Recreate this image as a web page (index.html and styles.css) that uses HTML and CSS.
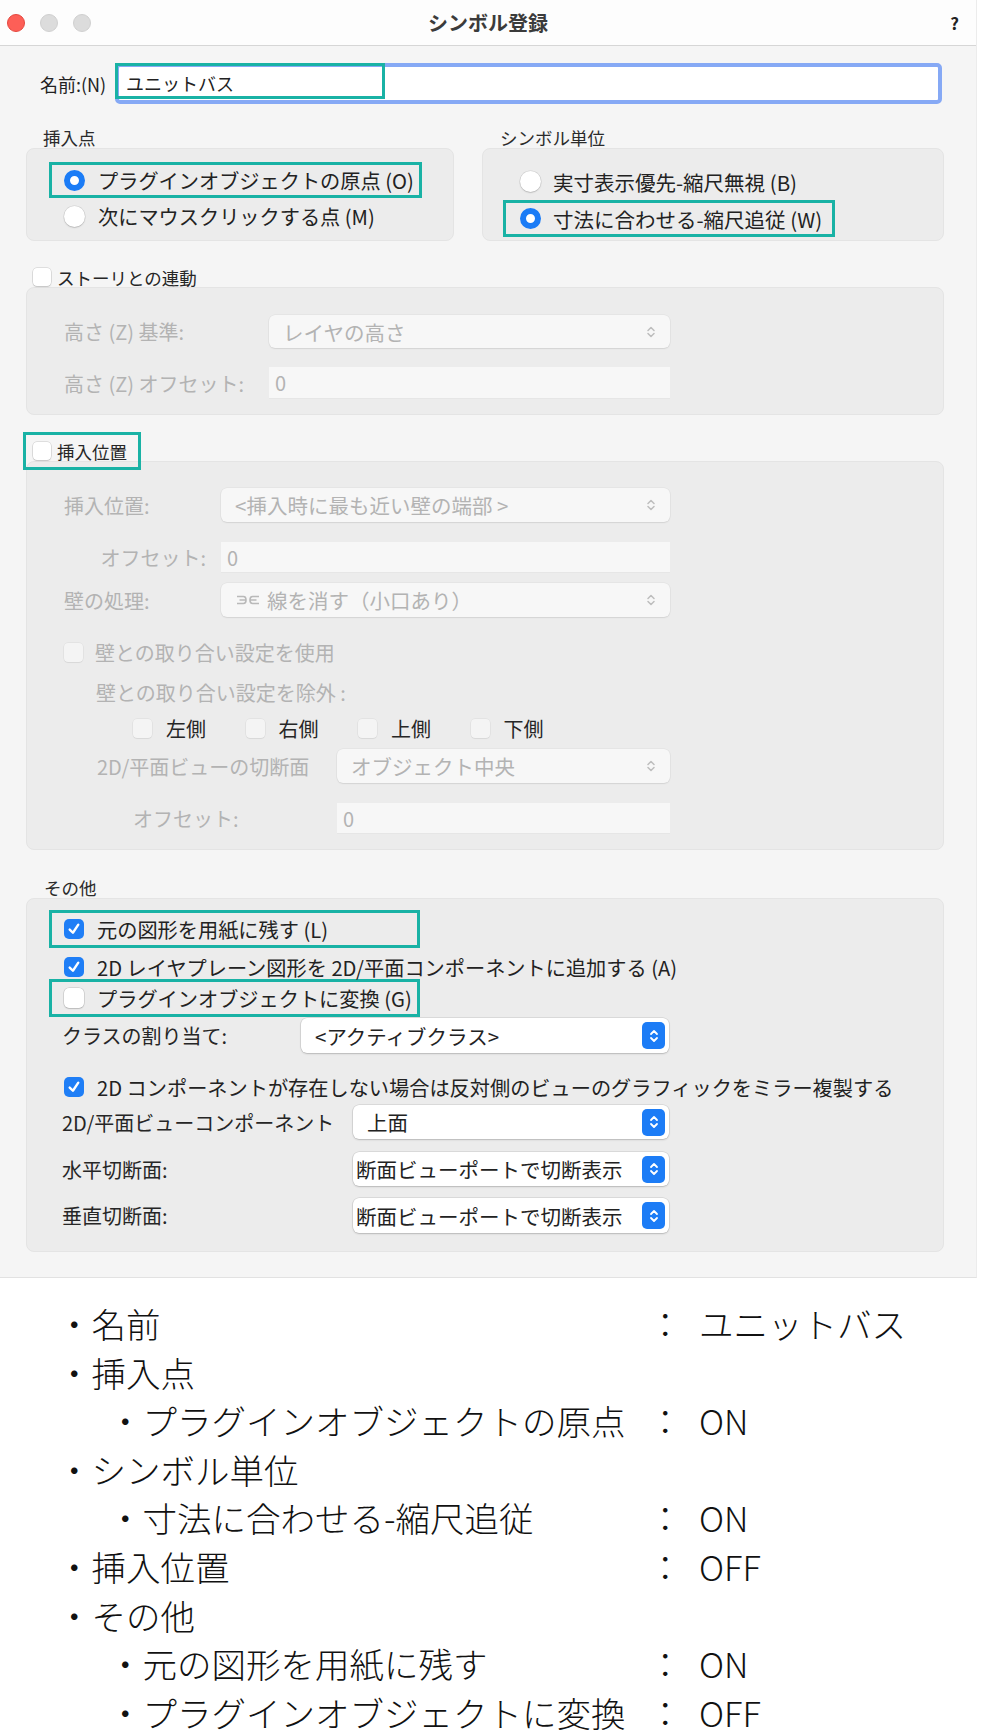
FILE: index.html
```html
<!DOCTYPE html>
<html lang="ja">
<head>
  <meta charset="UTF-8">
  <title>シンボル登録</title>
  <link rel="stylesheet" href="styles.css">
</head>
<body>
  <div class="dialog">
    <div class="titlebar">
      <div class="lights">
        <span class="light red"></span>
        <span class="light"></span>
        <span class="light"></span>
      </div>
      <div class="title">シンボル登録</div>
      <div class="help">?</div>
    </div>

    <div class="content">
      <div class="name-row">
        <span class="name-label">名前:(N)</span>
        <div class="name-field"><span class="name-mark"></span>ユニットバス</div>
      </div>

      <div class="cols">
        <div class="col col-left">
          <div class="sec-label">挿入点</div>
          <div class="group radios-left">
            <div class="line marked"><span class="radio on"></span>プラグインオブジェクトの原点 (O)</div>
            <div class="line"><span class="radio"></span>次にマウスクリックする点 (M)</div>
          </div>
        </div>
        <div class="col col-right">
          <div class="sec-label sec-label-right">シンボル単位</div>
          <div class="group radios-right">
            <div class="line"><span class="radio"></span>実寸表示優先-縮尺無視 (B)</div>
            <div class="line marked"><span class="radio on"></span>寸法に合わせる-縮尺追従 (W)</div>
          </div>
        </div>
      </div>

      <!-- ストーリ -->
      <div class="check-head"><span class="check"></span>ストーリとの連動</div>
      <div class="group form story">
        <div class="frow">
          <span class="flabel w205 off">高さ (Z) 基準:</span>
          <div class="popup off w401 h33">レイヤの高さ<span class="chev-off"><svg width="10" height="16" viewBox="0 0 10 16"><path d="M2 6.5L5 3.5L8 6.5M2 9.5L5 12.5L8 9.5" fill="none" stroke="#bdbdbd" stroke-width="1.5" stroke-linecap="round" stroke-linejoin="round"/></svg></span></div>
        </div>
        <div class="frow mt19">
          <span class="flabel w205 off">高さ (Z) オフセット:</span>
          <div class="field off w401 h32">0</div>
        </div>
      </div>

      <!-- 挿入位置 -->
      <div class="check-head outlined"><span class="check"></span>挿入位置</div>
      <div class="group form insert">
        <div class="frow">
          <span class="flabel w157 off">挿入位置:</span>
          <div class="popup off w449 h34">&lt;挿入時に最も近い壁の端部 &gt;<span class="chev-off"><svg width="10" height="16" viewBox="0 0 10 16"><path d="M2 6.5L5 3.5L8 6.5M2 9.5L5 12.5L8 9.5" fill="none" stroke="#bdbdbd" stroke-width="1.5" stroke-linecap="round" stroke-linejoin="round"/></svg></span></div>
        </div>
        <div class="frow mt20">
          <span class="flabel w157 off right">オフセット:</span>
          <div class="field off w449 h31">0</div>
        </div>
        <div class="frow mt10">
          <span class="flabel w157 off">壁の処理:</span>
          <div class="popup off w449 h34">
            <svg class="wall-icon" width="26" height="14" viewBox="0 0 26 14"><path d="M2 3.5H8.5Q11 3.5 11 7Q11 10.5 8.5 10.5H2M4.5 7H11M24 3.5H17.5Q15 3.5 15 7Q15 10.5 17.5 10.5H24M15 7H21.5" fill="none" stroke="#b9b9b9" stroke-width="1.6"/></svg>線を消す（小口あり）<span class="chev-off"><svg width="10" height="16" viewBox="0 0 10 16"><path d="M2 6.5L5 3.5L8 6.5M2 9.5L5 12.5L8 9.5" fill="none" stroke="#bdbdbd" stroke-width="1.5" stroke-linecap="round" stroke-linejoin="round"/></svg></span>
          </div>
        </div>
        <div class="frow mt23 h24">
          <span class="check off"></span><span class="off ml12">壁との取り合い設定を使用</span>
        </div>
        <div class="frow mt16 h24 pl32">
          <span class="off">壁との取り合い設定を除外 :</span>
        </div>
        <div class="frow mt12 h24 pl69">
          <span class="side"><span class="check off"></span>左側</span>
          <span class="side"><span class="check off"></span>右側</span>
          <span class="side"><span class="check off"></span>上側</span>
          <span class="side"><span class="check off"></span>下側</span>
        </div>
        <div class="frow mt9 pl33">
          <span class="flabel w240 off">2D/平面ビューの切断面</span>
          <div class="popup off w333 h34">オブジェクト中央<span class="chev-off"><svg width="10" height="16" viewBox="0 0 10 16"><path d="M2 6.5L5 3.5L8 6.5M2 9.5L5 12.5L8 9.5" fill="none" stroke="#bdbdbd" stroke-width="1.5" stroke-linecap="round" stroke-linejoin="round"/></svg></span></div>
        </div>
        <div class="frow mt20 pl69">
          <span class="flabel w204 off">オフセット:</span>
          <div class="field off w333 h31">0</div>
        </div>
      </div>

      <!-- その他 -->
      <div class="sec-label other-label">その他</div>
      <div class="group other">
        <div class="line cline marked"><span class="check on"><svg width="14" height="14" viewBox="0 0 13 13"><path d="M2.5 7L5.5 10L10.5 2.5" fill="none" stroke="#fff" stroke-width="2.2" stroke-linecap="round" stroke-linejoin="round"/></svg></span>元の図形を用紙に残す (L)</div>
        <div class="line cline"><span class="check on"><svg width="14" height="14" viewBox="0 0 13 13"><path d="M2.5 7L5.5 10L10.5 2.5" fill="none" stroke="#fff" stroke-width="2.2" stroke-linecap="round" stroke-linejoin="round"/></svg></span>2D レイヤプレーン図形を 2D/平面コンポーネントに追加する (A)</div>
        <div class="line cline marked tight"><span class="check big"></span>プラグインオブジェクトに変換 (G)</div>
        <div class="frow mt1 pl13">
          <span class="flabel w239">クラスの割り当て:</span>
          <div class="popup w368 h35">&lt;アクティブクラス&gt;<span class="stepper"><svg width="10" height="18" viewBox="0 0 10 18"><path d="M2 7L5 4L8 7M2 11L5 14L8 11" fill="none" stroke="#fff" stroke-width="1.8" stroke-linecap="round" stroke-linejoin="round"/></svg></span></div>
        </div>
        <div class="line cline mt15"><span class="check on"><svg width="14" height="14" viewBox="0 0 13 13"><path d="M2.5 7L5.5 10L10.5 2.5" fill="none" stroke="#fff" stroke-width="2.2" stroke-linecap="round" stroke-linejoin="round"/></svg></span>2D コンポーネントが存在しない場合は反対側のビューのグラフィックをミラー複製する</div>
        <div class="frow mtn1 pl13">
          <span class="flabel w291">2D/平面ビューコンポーネント</span>
          <div class="popup w316 h34">上面<span class="stepper"><svg width="10" height="18" viewBox="0 0 10 18"><path d="M2 7L5 4L8 7M2 11L5 14L8 11" fill="none" stroke="#fff" stroke-width="1.8" stroke-linecap="round" stroke-linejoin="round"/></svg></span></div>
        </div>
        <div class="frow mt13 pl13">
          <span class="flabel w291">水平切断面:</span>
          <div class="popup w316 h34 snug">断面ビューポートで切断表示<span class="stepper"><svg width="10" height="18" viewBox="0 0 10 18"><path d="M2 7L5 4L8 7M2 11L5 14L8 11" fill="none" stroke="#fff" stroke-width="1.8" stroke-linecap="round" stroke-linejoin="round"/></svg></span></div>
        </div>
        <div class="frow mt12 pl13">
          <span class="flabel w291">垂直切断面:</span>
          <div class="popup w316 h35 snug">断面ビューポートで切断表示<span class="stepper"><svg width="10" height="18" viewBox="0 0 10 18"><path d="M2 7L5 4L8 7M2 11L5 14L8 11" fill="none" stroke="#fff" stroke-width="1.8" stroke-linecap="round" stroke-linejoin="round"/></svg></span></div>
        </div>
      </div>
    </div>
  </div>

  <div class="summary">
    <div class="s-row"><span class="s-key">・名前</span><span class="s-colon">：</span><span class="s-val">ユニットバス</span></div>
    <div class="s-row"><span class="s-key">・挿入点</span></div>
    <div class="s-row sub"><span class="s-key">・プラグインオブジェクトの原点</span><span class="s-colon">：</span><span class="s-val">ON</span></div>
    <div class="s-row"><span class="s-key">・シンボル単位</span></div>
    <div class="s-row sub"><span class="s-key">・寸法に合わせる-縮尺追従</span><span class="s-colon">：</span><span class="s-val">ON</span></div>
    <div class="s-row"><span class="s-key">・挿入位置</span><span class="s-colon">：</span><span class="s-val">OFF</span></div>
    <div class="s-row"><span class="s-key">・その他</span></div>
    <div class="s-row sub"><span class="s-key">・元の図形を用紙に残す</span><span class="s-colon">：</span><span class="s-val">ON</span></div>
    <div class="s-row sub"><span class="s-key">・プラグインオブジェクトに変換</span><span class="s-colon">：</span><span class="s-val">OFF</span></div>
  </div>
</body>
</html>
```

FILE: styles.css
```css
body {
  margin: 0;
  padding: 0;
  background: #fff;
  color: #262626;
  font-family: "Noto Sans CJK JP", "Noto Sans", sans-serif;
}

.dialog {
  width: 976px;
  background: #f5f5f5;
  border-right: 1px solid #ececec;
  border-bottom: 1px solid #e2e2e2;
}

/* title bar */
.titlebar {
  height: 45px;
  background: #fdfdfd;
  border-bottom: 1px solid #d6d6d6;
  display: grid;
  grid-template-columns: 1fr auto 1fr;
  align-items: center;
}
.lights {
  display: flex;
  gap: 15px;
  padding-left: 7px;
}
.light {
  width: 18px;
  height: 18px;
  border-radius: 50%;
  background: #dcdcdc;
  border: 1px solid #d0d0d0;
  box-sizing: border-box;
}
.light.red {
  background: #fd5f57;
  border-color: #e5483f;
}
.title {
  font-size: 20px;
  font-weight: 700;
  color: #3b3b3b;
}
.help {
  justify-self: end;
  padding-right: 17px;
  font-size: 17px;
  font-weight: 700;
  color: #222;
}

.content {
  padding: 0 32px 25px 26px;
}

/* name */
.name-row {
  display: flex;
  align-items: center;
  margin-top: 17px;
  padding-left: 14px;
}
.name-label {
  width: 75px;
  font-size: 18px;
  color: #222;
}
.name-field {
  position: relative;
  width: 827px;
  height: 41px;
  box-sizing: border-box;
  border: 4px solid #86a9f5;
  border-radius: 5px;
  background: #fff;
  padding-left: 7px;
  font-size: 18px;
  line-height: 33px;
  color: #222;
}
.name-mark {
  position: absolute;
  left: -4px;
  top: -4px;
  width: 270px;
  height: 36px;
  box-sizing: border-box;
  border: 3px solid #19b2a5;
}

/* groups */
.cols {
  display: flex;
  gap: 28px;
  margin-top: 23px;
}
.col-left { width: 428px; }
.col-right { width: 462px; }
.sec-label {
  height: 21px;
  line-height: 21px;
  font-size: 17.5px;
  color: #2b2b2b;
  padding-left: 17px;
}
.sec-label-right { padding-left: 18px; }

.group {
  background: #ececec;
  border: 1px solid #e4e4e4;
  border-radius: 8px;
}

.line {
  display: flex;
  align-items: center;
  width: fit-content;
  box-sizing: border-box;
  border: 3px solid transparent;
  font-size: 20.5px;
  color: #222;
}
.line.marked { border-color: #19b2a5; }

.radios-left { padding: 13px 0 6px 22px; height: 93px; box-sizing: border-box; }
.radios-left .line { height: 36px; padding: 0 5px 0 12px; gap: 13px; font-size: 20.2px; }
.radios-right { padding: 14px 0 3px 20px; height: 93px; box-sizing: border-box; }
.radios-right .line { height: 37px; padding: 0 10px 0 14px; gap: 12px; }

.radio {
  width: 21px;
  height: 21px;
  border-radius: 50%;
  background: #fff;
  box-shadow: 0 0 0 0.5px rgba(0, 0, 0, 0.12), 0 1px 1.5px rgba(0, 0, 0, 0.15);
  flex: none;
}
.radio.on {
  background: #fff;
  border: 6.5px solid #1b7cf6;
  box-sizing: border-box;
  box-shadow: none;
}

.check {
  width: 18px;
  height: 18px;
  border-radius: 4px;
  background: #fff;
  box-shadow: 0 0 0 0.5px rgba(0, 0, 0, 0.18), 0 1px 1.5px rgba(0, 0, 0, 0.12);
  flex: none;
  display: flex;
  align-items: center;
  justify-content: center;
}
.check.big {
  width: 20px;
  height: 20px;
  border-radius: 5px;
}
.check.on {
  width: 20px;
  height: 20px;
  border-radius: 5px;
  background: #1f7ef6;
  box-shadow: none;
}
.check.off {
  width: 19px;
  height: 19px;
  background: #f4f4f4;
  box-shadow: 0 0 0 0.5px rgba(0, 0, 0, 0.07), 0 1px 1px rgba(0, 0, 0, 0.05);
}

.check-head {
  display: flex;
  align-items: center;
  gap: 6px;
  width: fit-content;
  height: 18px;
  margin: 27px 0 1px 7px;
  padding-right: 4px;
  font-size: 17.5px;
  color: #262626;
}
.check-head.outlined {
  outline: 3px solid #19b2a5;
  outline-offset: 7px;
}

.form { padding-left: 37px; }
.story { padding-top: 27px; padding-bottom: 15px; }
.insert { padding-top: 26px; padding-bottom: 15px; }

.frow {
  display: flex;
  align-items: center;
  font-size: 20px;
}
.flabel { flex: none; }
.flabel.right { text-align: right; padding-right: 15px; box-sizing: border-box; }
.off { color: #b3b3b3; }

.w157 { width: 157px; }
.w204 { width: 204px; }
.w205 { width: 205px; }
.w239 { width: 239px; }
.w240 { width: 240px; }
.w291 { width: 291px; }
.w316 { width: 316px; }
.w333 { width: 333px; }
.w368 { width: 368px; }
.w401 { width: 401px; }
.w449 { width: 449px; }
.h24 { height: 24px; }
.h31 { height: 31px; }
.h32 { height: 32px; }
.h33 { height: 33px; }
.h34 { height: 34px; }
.h35 { height: 35px; }
.mt1 { margin-top: 1px; }
.mtn1 { margin-top: -1px; }
.mt9 { margin-top: 9px; }
.mt10 { margin-top: 10px; }
.mt12 { margin-top: 12px; }
.mt13 { margin-top: 13px; }
.mt15 { margin-top: 15px; }
.mt16 { margin-top: 16px; }
.mt19 { margin-top: 19px; }
.mt20 { margin-top: 20px; }
.mt23 { margin-top: 23px; }
.ml12 { margin-left: 12px; }
.pl13 { padding-left: 13px; }
.pl32 { padding-left: 32px; }
.pl33 { padding-left: 33px; }
.pl69 { padding-left: 69px; }

.popup {
  display: flex;
  align-items: center;
  box-sizing: border-box;
  padding-left: 14px;
  border-radius: 6px;
  background: #fff;
  box-shadow: 0 0 0 0.5px rgba(0, 0, 0, 0.14), 0 1px 2px rgba(0, 0, 0, 0.16);
  font-size: 20.5px;
  color: #222;
}
.popup.snug { padding-left: 3px; }
.popup.off {
  background: #f7f7f7;
  color: #b3b3b3;
  box-shadow: 0 0 0 0.5px rgba(0, 0, 0, 0.06), 0 1px 1.5px rgba(0, 0, 0, 0.08);
}
.chev-off {
  margin-left: auto;
  margin-right: 14px;
  display: flex;
}
.stepper {
  margin-left: auto;
  margin-right: 4px;
  width: 23px;
  height: 27px;
  border-radius: 5px;
  background: #1c7cf6;
  display: flex;
  align-items: center;
  justify-content: center;
}
.wall-icon { margin-right: 6px; }

.field {
  display: flex;
  align-items: center;
  box-sizing: border-box;
  padding-left: 6px;
  background: #f7f7f7;
  border-bottom: 1px solid #e6e6e6;
  font-size: 20px;
}
.field.off { color: #b3b3b3; }

.side {
  display: flex;
  align-items: center;
  gap: 14px;
  width: 112.5px;
}

.other-label {
  margin-top: 27px;
  padding-left: 18px;
}
.other { padding: 11px 0 18px 22px; }
.cline {
  height: 38px;
  padding-left: 12px;
  gap: 13px;
  font-size: 20.2px;
}
.cline.marked { width: 371px; }
.cline.tight { margin-top: -7px; }

/* summary */
.summary {
  padding: 21px 0 0 57px;
  font-size: 34.5px;
  font-weight: 300;
  line-height: 48.6px;
  color: #111;
}
.s-row { display: flex; }
.s-key { width: 591px; box-sizing: border-box; }
.s-row.sub .s-key { padding-left: 51px; }
.s-colon { width: 34px; text-align: center; }
.s-val { margin-left: 17px; }
```
